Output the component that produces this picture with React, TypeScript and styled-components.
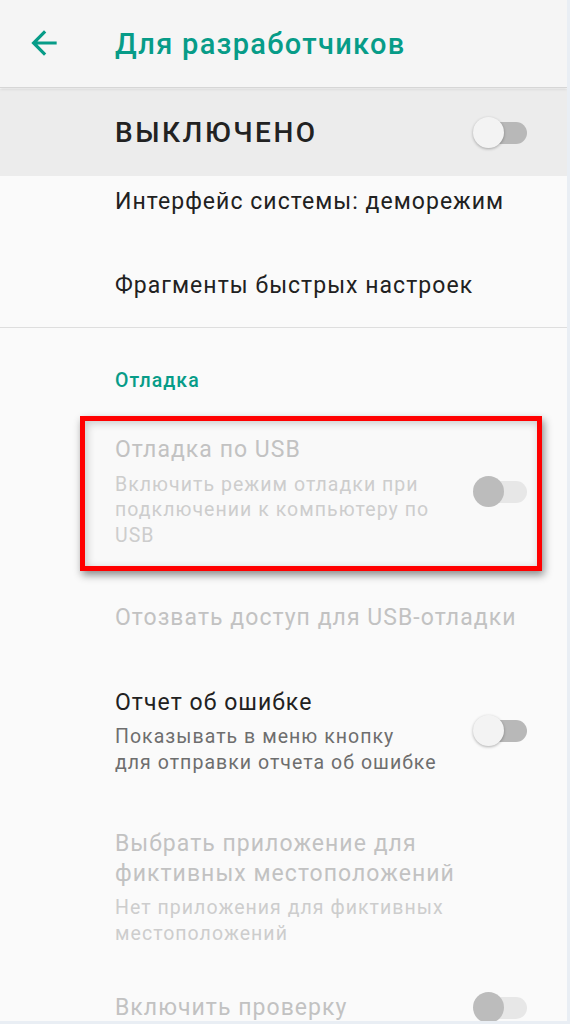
import React from 'react'
import styled, { createGlobalStyle, css } from 'styled-components'

const GlobalStyle = createGlobalStyle`
    html, body {
        margin: 0;
        padding: 0;
        background: #fafafa;
    }

    body {
        font-family: Roboto, "Noto Sans", "Liberation Sans", sans-serif;
        -webkit-font-smoothing: antialiased;
        letter-spacing: 0.065em;
    }
`

const TEAL = '#079c88'

interface ToggleProps {
    disabled?: boolean
}

const Toggle: React.FC<ToggleProps> = ({ disabled }) => (
    <Switch $disabled={disabled}>
        <span className="track" />
        <span className="thumb" />
    </Switch>
)

interface PrefProps {
    title: string[]
    summary?: string[]
    disabled?: boolean
    toggle?: 'on' | 'disabled'
    top?: number
    bottom?: number
}

const Pref: React.FC<PrefProps> = ({ title, summary, disabled, toggle, top = 23, bottom = 23 }) => (
    <Row $top={top} $bottom={bottom}>
        <Texts>
            <Title $disabled={disabled}>
                {title.map(line => <span key={line}>{line}</span>)}
            </Title>
            {summary && (
                <Summary $disabled={disabled}>
                    {summary.map(line => <span key={line}>{line}</span>)}
                </Summary>
            )}
        </Texts>
        {toggle && <Toggle disabled={toggle === 'disabled'} />}
    </Row>
)

export default function App() {
    return (
        <>
            <GlobalStyle />
            <Screen>
                <AppBar>
                    <BackButton aria-label="back">
                        <svg viewBox="0 0 24 24" width="38" height="38">
                            <path fill={TEAL} d="M20 11H7.83l5.59-5.59L12 4l-8 8 8 8 1.41-1.41L7.83 13H20v-2z" />
                        </svg>
                    </BackButton>
                    <AppTitle>Для разработчиков</AppTitle>
                </AppBar>

                <MasterBar>
                    <MasterLabel>ВЫКЛЮЧЕНО</MasterLabel>
                    <Toggle />
                </MasterBar>

                <List>
                    <SimpleRow $first>Интерфейс системы: деморежим</SimpleRow>
                    <SimpleRow>Фрагменты быстрых настроек</SimpleRow>
                    <Divider />

                    <Category>Отладка</Category>

                    <Highlight>
                        <Pref
                            title={['Отладка по USB']}
                            summary={['Включить режим отладки при', 'подключении к компьютеру по', 'USB']}
                            disabled
                            toggle="disabled"
                            top={14}
                            bottom={18}
                        />
                    </Highlight>

                    <Pref title={['Отозвать доступ для USB-отладки']} disabled top={32} bottom={32} />

                    <Pref
                        title={['Отчет об ошибке']}
                        summary={['Показывать в меню кнопку', 'для отправки отчета об ошибке']}
                        toggle="on"
                    />

                    <Pref
                        title={['Выбрать приложение для', 'фиктивных местоположений']}
                        summary={['Нет приложения для фиктивных', 'местоположений']}
                        disabled
                        top={31}
                    />

                    <Pref title={['Включить проверку']} disabled toggle="disabled" />
                </List>
            </Screen>
        </>
    )
}

const Screen = styled.div`
    width: 570px;
    height: 1024px;
    box-sizing: border-box;
    overflow: hidden;
    background: #fafafa;
    border-right: 3px solid #e9eef4;
    border-bottom: 3px solid #e9eef4;
    display: flex;
    flex-direction: column;
`

const AppBar = styled.header`
    position: relative;
    z-index: 2;
    flex: 0 0 87px;
    display: flex;
    align-items: center;
    padding-left: 25px;
    gap: 52px;
    background: #f5f5f5;
    box-shadow: 0 1px 0 #d6d6d6, 0 2px 3px rgba(0, 0, 0, 0.12);
`

const BackButton = styled.button`
    display: flex;
    padding: 0;
    margin: 0 0 2px;
    border: none;
    background: transparent;
`

const AppTitle = styled.h1`
    margin: 0;
    font-size: 29px;
    font-weight: 500;
    color: ${TEAL};
    letter-spacing: 0.045em;
`

const MasterBar = styled.div`
    position: relative;
    z-index: 1;
    flex: 0 0 87px;
    margin-top: 2px;
    display: flex;
    align-items: center;
    justify-content: space-between;
    padding: 0 40px 0 115px;
    background: #ececec;
`

const MasterLabel = styled.span`
    font-size: 28px;
    font-weight: 500;
    color: #222;
    letter-spacing: 0.09em;
`

const List = styled.div`
    display: flex;
    flex-direction: column;
`

const SimpleRow = styled.div<{ $first?: boolean }>`
    height: 83px;
    box-sizing: border-box;
    display: flex;
    align-items: center;
    padding-left: 115px;
    font-size: 23px;
    line-height: 28px;
    color: #212121;
    ${({ $first }) => $first && css`
        height: 68px;
        padding-top: 12px;
        align-items: flex-start;
    `}
`

const Divider = styled.hr`
    margin: 0;
    border: none;
    height: 1px;
    background: #dedede;
`

const Category = styled.div`
    padding: 41px 0 0 115px;
    height: 88px;
    box-sizing: border-box;
    font-size: 19.5px;
    font-weight: 500;
    color: ${TEAL};
`

const Highlight = styled.div`
    margin: 0 25px 0 80px;
    border: 5px solid #ff0000;
    background: #f9f9f9;
    box-shadow: 2px 4px 8px rgba(0, 0, 0, 0.45), inset 2px 2px 8px rgba(0, 0, 0, 0.2);

    & > div {
        padding-left: 30px;
        padding-right: 10px;
    }
`

const Row = styled.div<{ $top: number; $bottom: number }>`
    display: flex;
    align-items: center;
    justify-content: space-between;
    padding: ${({ $top, $bottom }) => `${$top}px 40px ${$bottom}px 115px`};
`

const Texts = styled.div`
    display: flex;
    flex-direction: column;
`

const Title = styled.div<{ $disabled?: boolean }>`
    display: flex;
    flex-direction: column;
    font-size: 23px;
    line-height: 29.5px;
    color: ${({ $disabled }) => ($disabled ? '#c2c2c2' : '#212121')};
`

const Summary = styled.div<{ $disabled?: boolean }>`
    display: flex;
    flex-direction: column;
    margin-top: 7px;
    font-size: 19.5px;
    line-height: 25.5px;
    color: ${({ $disabled }) => ($disabled ? '#cdcdcd' : '#6e6e6e')};
`

const Switch = styled.span<{ $disabled?: boolean }>`
    position: relative;
    flex: 0 0 auto;
    width: 54px;
    height: 32px;
    display: inline-block;

    .track {
        position: absolute;
        right: 0;
        top: 5px;
        width: 46px;
        height: 22px;
        border-radius: 11px;
        background: ${({ $disabled }) => ($disabled ? '#e7e7e7' : '#b8b8b8')};
    }

    .thumb {
        position: absolute;
        left: 0;
        top: 0;
        width: 31px;
        height: 31px;
        border-radius: 50%;
        background: ${({ $disabled }) => ($disabled ? '#bcbcbc' : '#f3f3f3')};
        box-shadow: ${({ $disabled }) => ($disabled ? 'none' : '0 1px 3px rgba(0, 0, 0, 0.3)')};
    }
`
